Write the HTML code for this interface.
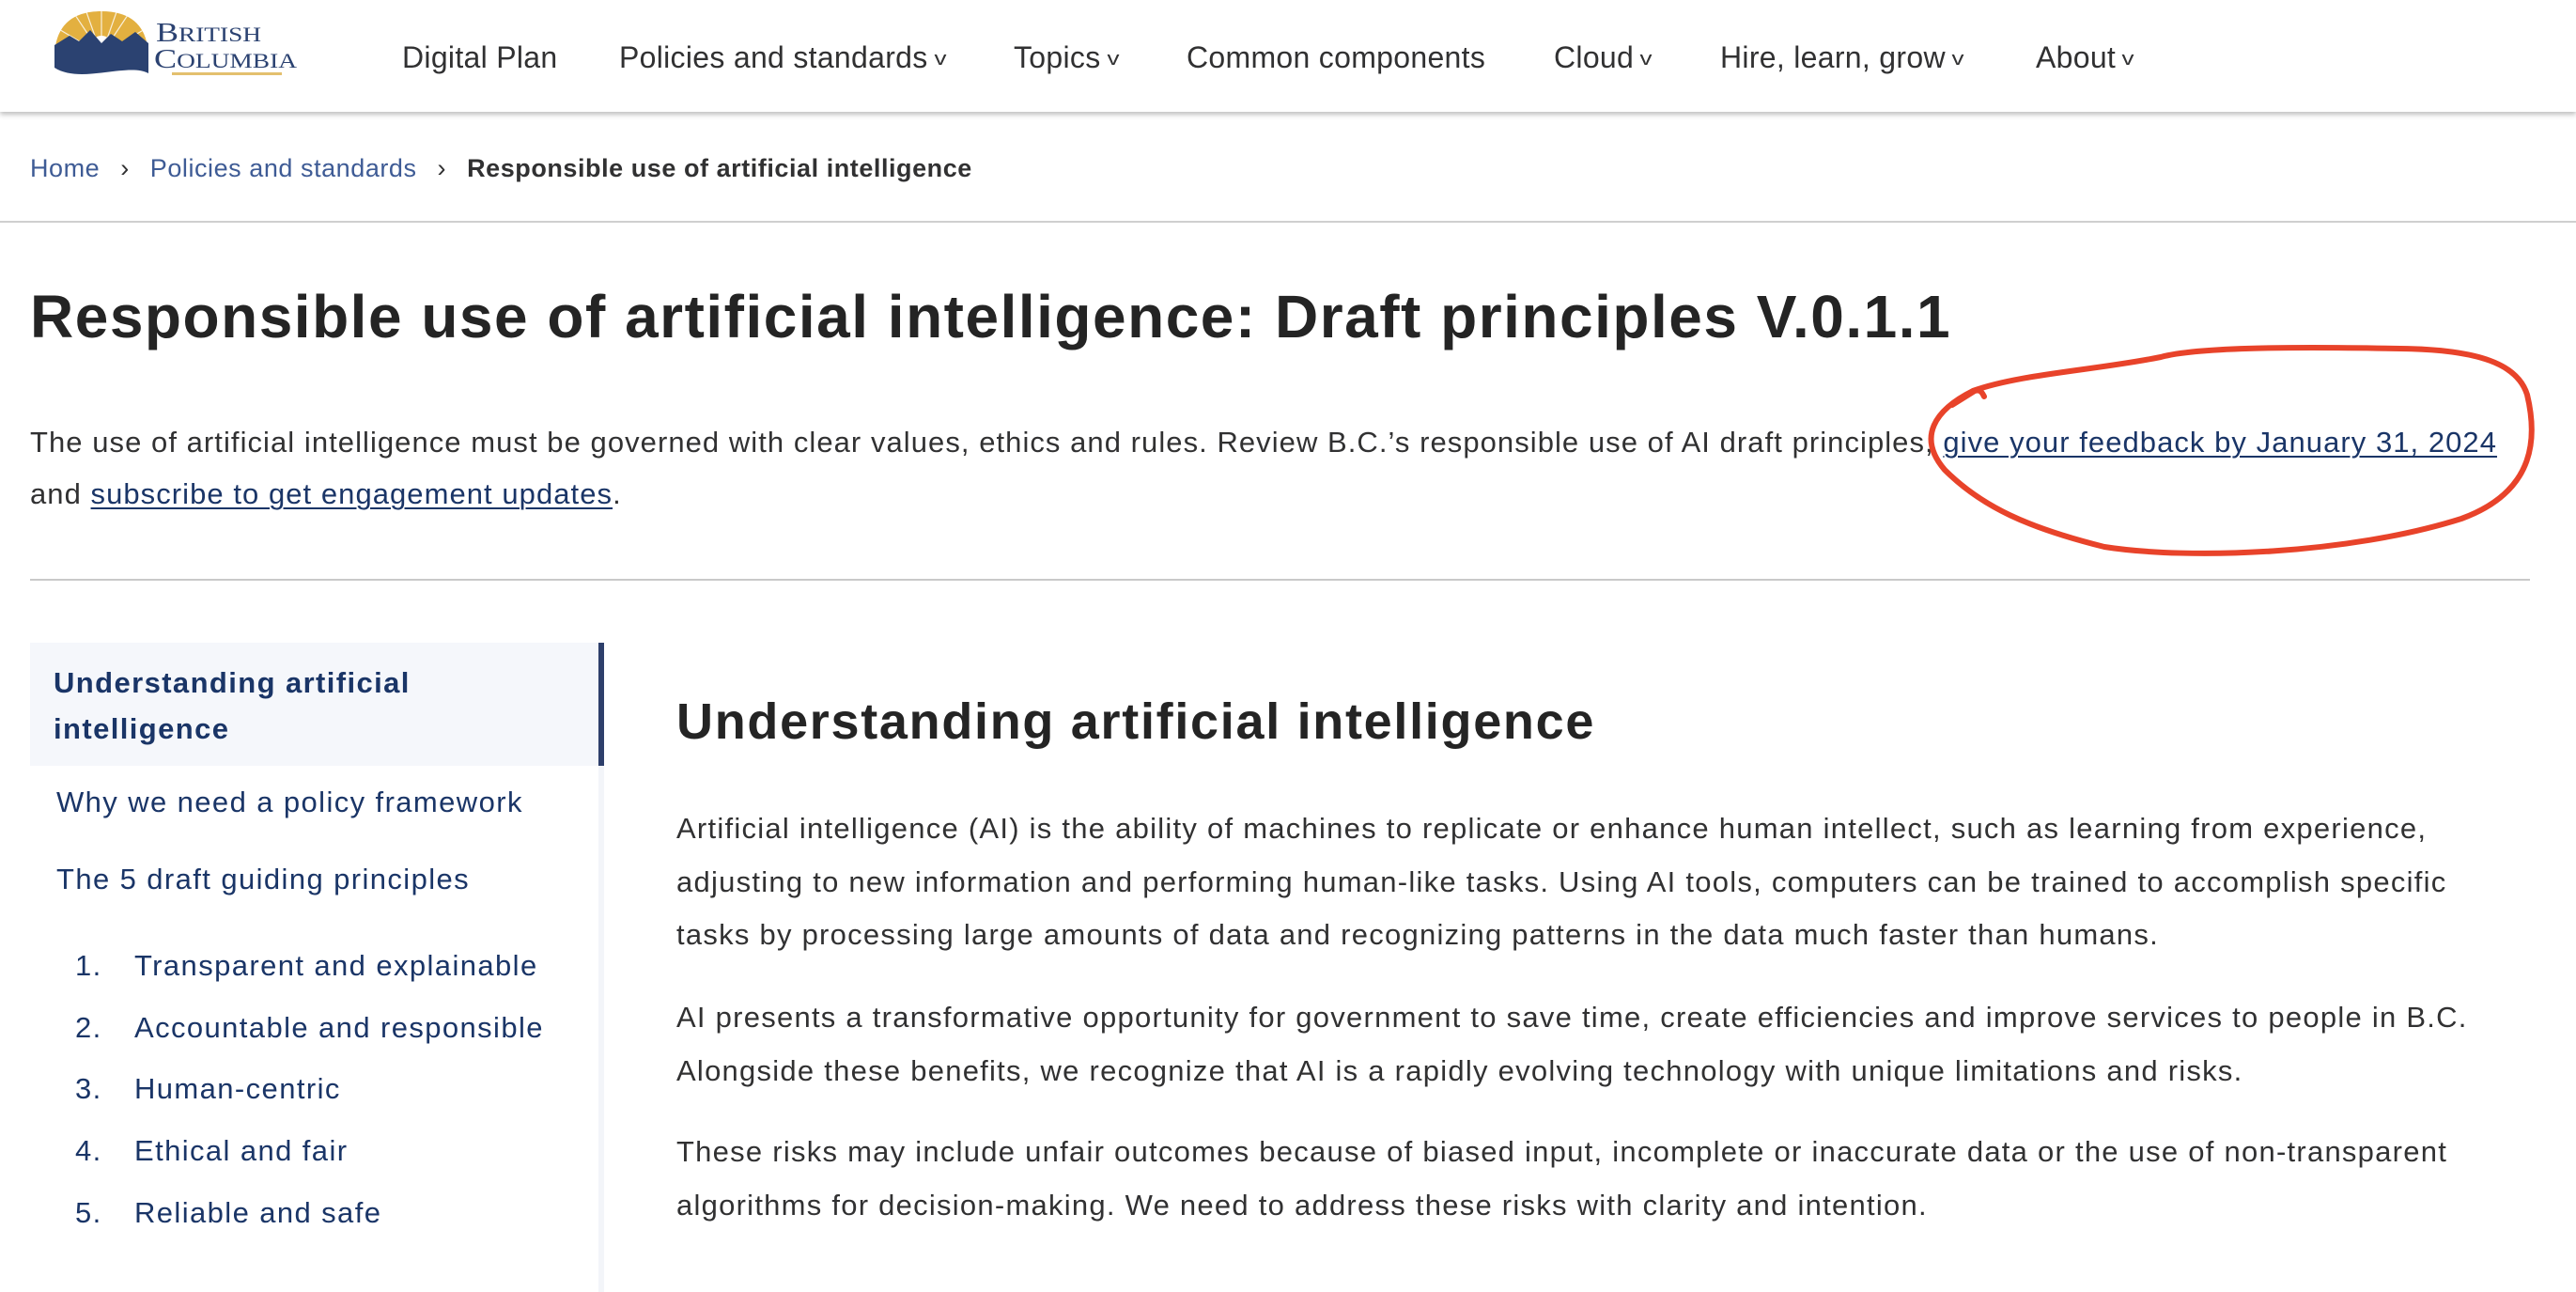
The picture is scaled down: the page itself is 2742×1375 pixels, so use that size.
<!DOCTYPE html>
<html><head><meta charset="utf-8"><style>
*{margin:0;padding:0;box-sizing:border-box}
body{width:2742px;height:1366px;overflow:hidden;background:#fff;font-family:"Liberation Sans",sans-serif;color:#313132;position:relative}
.abs{position:absolute;white-space:nowrap}
header{position:absolute;left:0;top:0;width:2742px;height:119px;background:#fff;box-shadow:0 3px 5px rgba(0,0,0,.25);z-index:2}
.nav{font-size:32px;color:#313132;top:43px;letter-spacing:0.3px}
.car{font-size:20px;display:inline-block;transform:scaleX(1.3);margin-left:8px;vertical-align:3px}
.bc{font-size:27px;top:164px;letter-spacing:0.55px}
.bc a{color:#3e5b95;text-decoration:none}
h1{position:absolute;left:32px;top:300px;font-size:64px;font-weight:bold;color:#242424;white-space:nowrap;letter-spacing:1.5px}
.p{font-size:31px;line-height:55px;color:#313132;letter-spacing:1.05px}
a.u{color:#1a3567;text-decoration:underline;text-decoration-thickness:2px;text-underline-offset:4px}
.side{font-size:31px;color:#1a3567;letter-spacing:1.4px}
.mp{font-size:31px;line-height:56.5px;color:#313132;left:720px;letter-spacing:1.25px}
</style></head><body>
<header>
<svg class="abs" style="left:56px;top:10px" width="270" height="72" viewBox="0 0 270 72">
<defs><clipPath id="c"><path d="M2 52 C2 18 20 2 52 2 C84 2 102 18 102 52 Z"/></clipPath></defs>
<g clip-path="url(#c)">
<rect x="0" y="0" width="104" height="60" fill="#e3b040"/>
<g stroke="#fff" stroke-width="1.2" opacity=".8">
<line x1="52" y1="48" x2="20" y2="0"/><line x1="52" y1="48" x2="35" y2="0"/><line x1="52" y1="48" x2="52" y2="0"/><line x1="52" y1="48" x2="69" y2="0"/><line x1="52" y1="48" x2="84" y2="0"/><line x1="52" y1="48" x2="5" y2="20"/><line x1="52" y1="48" x2="100" y2="20"/></g>
<circle cx="52" cy="40" r="12" fill="#fff"/>
</g>
<path d="M2 38 L18 28 L28 34 L40 22 L52 36 L62 26 L74 34 L88 24 L102 36 L102 68 C80 56 30 80 2 62 Z" fill="#2b4271"/>
<text x="110" y="34" font-family="Liberation Serif,serif" font-size="29" fill="#2b4271" textLength="112" lengthAdjust="spacingAndGlyphs">B<tspan font-size="22">RITISH</tspan></text>
<text x="108" y="62" font-family="Liberation Serif,serif" font-size="29" fill="#2b4271" textLength="152" lengthAdjust="spacingAndGlyphs">C<tspan font-size="22">OLUMBIA</tspan></text>
<rect x="127" y="67" width="117" height="3" fill="#e3c06e"/>
</svg>
<div class="abs nav" style="left:428px">Digital Plan</div>
<div class="abs nav" style="left:659px">Policies and standards<span class="car">v</span></div>
<div class="abs nav" style="left:1079px">Topics<span class="car">v</span></div>
<div class="abs nav" style="left:1263px">Common components</div>
<div class="abs nav" style="left:1654px">Cloud<span class="car">v</span></div>
<div class="abs nav" style="left:1831px">Hire, learn, grow<span class="car">v</span></div>
<div class="abs nav" style="left:2167px">About<span class="car">v</span></div>
</header>
<div class="abs bc" style="left:32px"><a>Home</a><span style="margin:0 22px;color:#313132">›</span><a>Policies and standards</a><span style="margin:0 22px;color:#313132">›</span><b style="color:#313132">Responsible use of artificial intelligence</b></div>
<div class="abs" style="left:0;top:235px;width:2742px;height:2px;background:#cfcfcf"></div>
<h1>Responsible use of artificial intelligence: Draft principles V.0.1.1</h1>
<div class="abs p" style="left:32px;top:443px">The use of artificial intelligence must be governed with clear values, ethics and rules. Review B.C.’s responsible use of AI draft principles, <a class="u">give your feedback by January 31, 2024</a><br>and <a class="u">subscribe to get engagement updates</a>.</div>
<div class="abs" style="left:32px;top:616px;width:2661px;height:2px;background:#c9c9c9"></div>
<svg class="abs" style="left:0;top:0;z-index:3" width="2742" height="700" viewBox="0 0 2742 700" fill="none" stroke="#e8432a" stroke-width="6" stroke-linecap="round">
<path d="M2100,416 C2060,436 2040,465 2070,500 C2110,540 2160,562 2240,582 C2330,596 2500,590 2620,552 C2702,522 2700,462 2690,420 C2680,388 2640,372 2555,371 C2450,369 2340,369 2300,380 C2230,394 2150,398 2100,416"/>
<path d="M2078,431 L2102,416 C2108,414 2110,418 2112,422"/>
</svg>
<div class="abs" style="left:32px;top:684px;width:611px;height:131px;background:#f5f7fb"></div>
<div class="abs" style="left:637px;top:684px;width:6px;height:131px;background:#2e3f6b"></div>
<div class="abs" style="left:637px;top:815px;width:6px;height:560px;background:#f3f5f9"></div>
<div class="abs side" style="left:57px;top:702px;line-height:49px;font-weight:bold">Understanding artificial<br>intelligence</div>
<div class="abs side" style="left:60px;top:836px">Why we need a policy framework</div>
<div class="abs side" style="left:60px;top:918px">The 5 draft guiding principles</div>
<div class="abs side" style="left:80px;top:1010px">1.</div><div class="abs side" style="left:143px;top:1010px">Transparent and explainable</div>
<div class="abs side" style="left:80px;top:1076px">2.</div><div class="abs side" style="left:143px;top:1076px">Accountable and responsible</div>
<div class="abs side" style="left:80px;top:1141px">3.</div><div class="abs side" style="left:143px;top:1141px">Human-centric</div>
<div class="abs side" style="left:80px;top:1207px">4.</div><div class="abs side" style="left:143px;top:1207px">Ethical and fair</div>
<div class="abs side" style="left:80px;top:1273px">5.</div><div class="abs side" style="left:143px;top:1273px">Reliable and safe</div>
<div class="abs" style="left:720px;top:737px;font-size:54px;font-weight:bold;color:#242424;letter-spacing:1.7px">Understanding artificial intelligence</div>
<div class="abs mp" style="top:854px">Artificial intelligence (AI) is the ability of machines to replicate or enhance human intellect, such as learning from experience,<br>adjusting to new information and performing human-like tasks. Using AI tools, computers can be trained to accomplish specific<br>tasks by processing large amounts of data and recognizing patterns in the data much faster than humans.</div>
<div class="abs mp" style="top:1055px">AI presents a transformative opportunity for government to save time, create efficiencies and improve services to people in B.C.<br>Alongside these benefits, we recognize that AI is a rapidly evolving technology with unique limitations and risks.</div>
<div class="abs mp" style="top:1198px">These risks may include unfair outcomes because of biased input, incomplete or inaccurate data or the use of non-transparent<br>algorithms for decision-making. We need to address these risks with clarity and intention.</div>
</body></html>
